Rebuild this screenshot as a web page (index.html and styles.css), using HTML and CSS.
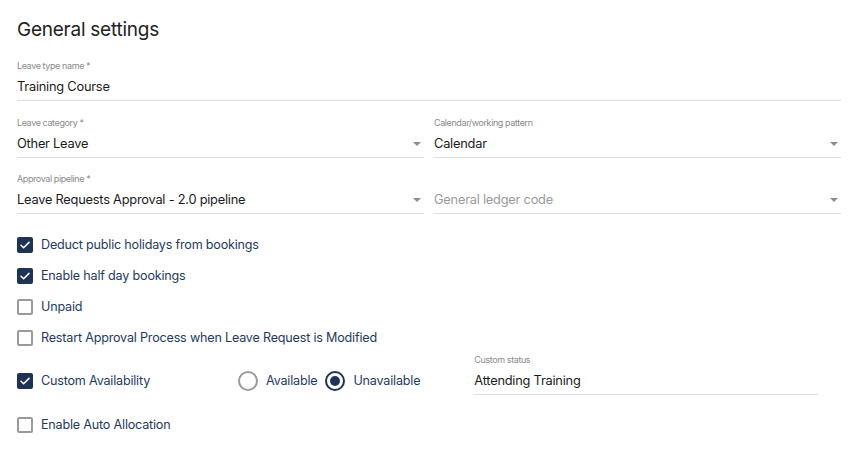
FILE: index.html
```html
<!DOCTYPE html>
<html lang="en">
<head>
<meta charset="utf-8">
<title>General settings</title>
<link rel="stylesheet" href="styles.css">
</head>
<body>
<div class="page">
  <h1 class="title">General settings</h1>

  <div class="field full">
    <div class="label">Leave type name *</div>
    <div class="value">Training Course</div>
  </div>

  <div class="grid">
    <div class="field select">
      <div class="label">Leave category *</div>
      <div class="value">Other Leave<span class="arrow"></span></div>
    </div>
    <div class="field select">
      <div class="label">Calendar/working pattern</div>
      <div class="value">Calendar<span class="arrow"></span></div>
    </div>
    <div class="field select">
      <div class="label">Approval pipeline *</div>
      <div class="value">Leave Requests Approval - 2.0 pipeline<span class="arrow"></span></div>
    </div>
    <div class="field select">
      <div class="label"></div>
      <div class="value placeholder">General ledger code<span class="arrow"></span></div>
    </div>
  </div>

  <div class="checks">
    <div class="check-row">
      <span class="box checked"><svg viewBox="0 0 16 16"><path d="M4 8.2l2.6 2.6L12 5.4" /></svg></span>
      <span class="check-text">Deduct public holidays from bookings</span>
    </div>
    <div class="check-row">
      <span class="box checked"><svg viewBox="0 0 16 16"><path d="M4 8.2l2.6 2.6L12 5.4" /></svg></span>
      <span class="check-text">Enable half day bookings</span>
    </div>
    <div class="check-row">
      <span class="box"></span>
      <span class="check-text">Unpaid</span>
    </div>
    <div class="check-row">
      <span class="box"></span>
      <span class="check-text">Restart Approval Process when Leave Request is Modified</span>
    </div>

    <div class="custom-row">
      <div class="check-row custom-check">
        <span class="box checked"><svg viewBox="0 0 16 16"><path d="M4 8.2l2.6 2.6L12 5.4" /></svg></span>
        <span class="check-text">Custom Availability</span>
      </div>
      <div class="radios">
        <span class="radio"></span>
        <span class="check-text">Available</span>
        <span class="radio on"></span>
        <span class="check-text">Unavailable</span>
      </div>
      <div class="field status">
        <div class="label">Custom status</div>
        <div class="value">Attending Training</div>
      </div>
    </div>

    <div class="check-row auto">
      <span class="box"></span>
      <span class="check-text">Enable Auto Allocation</span>
    </div>
  </div>
</div>
</body>
</html>
```

FILE: styles.css
```css
* { box-sizing: border-box; }

html, body {
  margin: 0;
  padding: 0;
  background: #ffffff;
}

body {
  font-family: Inter, "Noto Sans", "Liberation Sans", sans-serif;
  color: #1a1a1a;
}

.page {
  width: 868px;
  padding: 18px 27px 0 17px;
}

.title {
  margin: 0 0 17px 0;
  font-size: 19px;
  line-height: 24px;
  font-weight: 400;
  color: #222222;
  letter-spacing: -0.25px;
}

.field {
  border-bottom: 1px solid #dcdcdc;
  margin-bottom: 15px;
}

.label {
  height: 14px;
  font-size: 9px;
  line-height: 14px;
  color: #8a8a8a;
  letter-spacing: -0.4px;
}

.value {
  position: relative;
  height: 27px;
  font-size: 12.8px;
  line-height: 27px;
  color: #1a1a1a;
  letter-spacing: -0.22px;
}

.value.placeholder {
  color: #9a9a9a;
}

.grid {
  display: grid;
  grid-template-columns: 1fr 1fr;
  column-gap: 10px;
}

.grid .field {
  margin-bottom: 14px;
}

.arrow {
  position: absolute;
  right: 3px;
  top: 12px;
  width: 0;
  height: 0;
  border-left: 4.5px solid transparent;
  border-right: 4.5px solid transparent;
  border-top: 4.5px solid #8c8c8c;
}

.checks {
  display: flex;
  flex-direction: column;
  padding-top: 1px;
}

.check-row {
  display: flex;
  align-items: center;
  height: 31px;
}

.box {
  width: 16px;
  height: 16px;
  border: 2px solid #9a9a9a;
  border-radius: 2px;
  margin-right: 8px;
  flex: none;
  display: flex;
  align-items: center;
  justify-content: center;
}

.box.checked {
  background: #1f3454;
  border-color: #1f3454;
}

.box svg {
  width: 16px;
  height: 16px;
  flex: none;
}

.box svg path {
  fill: none;
  stroke: #ffffff;
  stroke-width: 1.5;
  stroke-linecap: round;
  stroke-linejoin: round;
}

.check-text {
  font-size: 12.6px;
  color: #1f3a60;
  letter-spacing: -0.2px;
  white-space: nowrap;
}

.custom-row {
  display: flex;
  align-items: flex-end;
}

.custom-row .custom-check {
  width: 221px;
  height: 27px;
  margin-bottom: 1px;
}

.radios {
  display: flex;
  align-items: center;
  height: 27px;
  margin-bottom: 1px;
}

.radio {
  width: 20px;
  height: 20px;
  border: 2px solid #9a9a9a;
  border-radius: 50%;
  margin-right: 8px;
  flex: none;
  position: relative;
}

.radios .check-text + .radio {
  margin-left: 8px;
}

.radio.on {
  border-color: #1f3454;
}

.radio.on::after {
  content: "";
  position: absolute;
  left: 3px;
  top: 3px;
  width: 10px;
  height: 10px;
  border-radius: 50%;
  background: #1f3454;
}

.field.status {
  width: 344px;
  margin-left: 54px;
  margin-bottom: 0;
}

.check-row.auto {
  margin-top: 14px;
}
```
